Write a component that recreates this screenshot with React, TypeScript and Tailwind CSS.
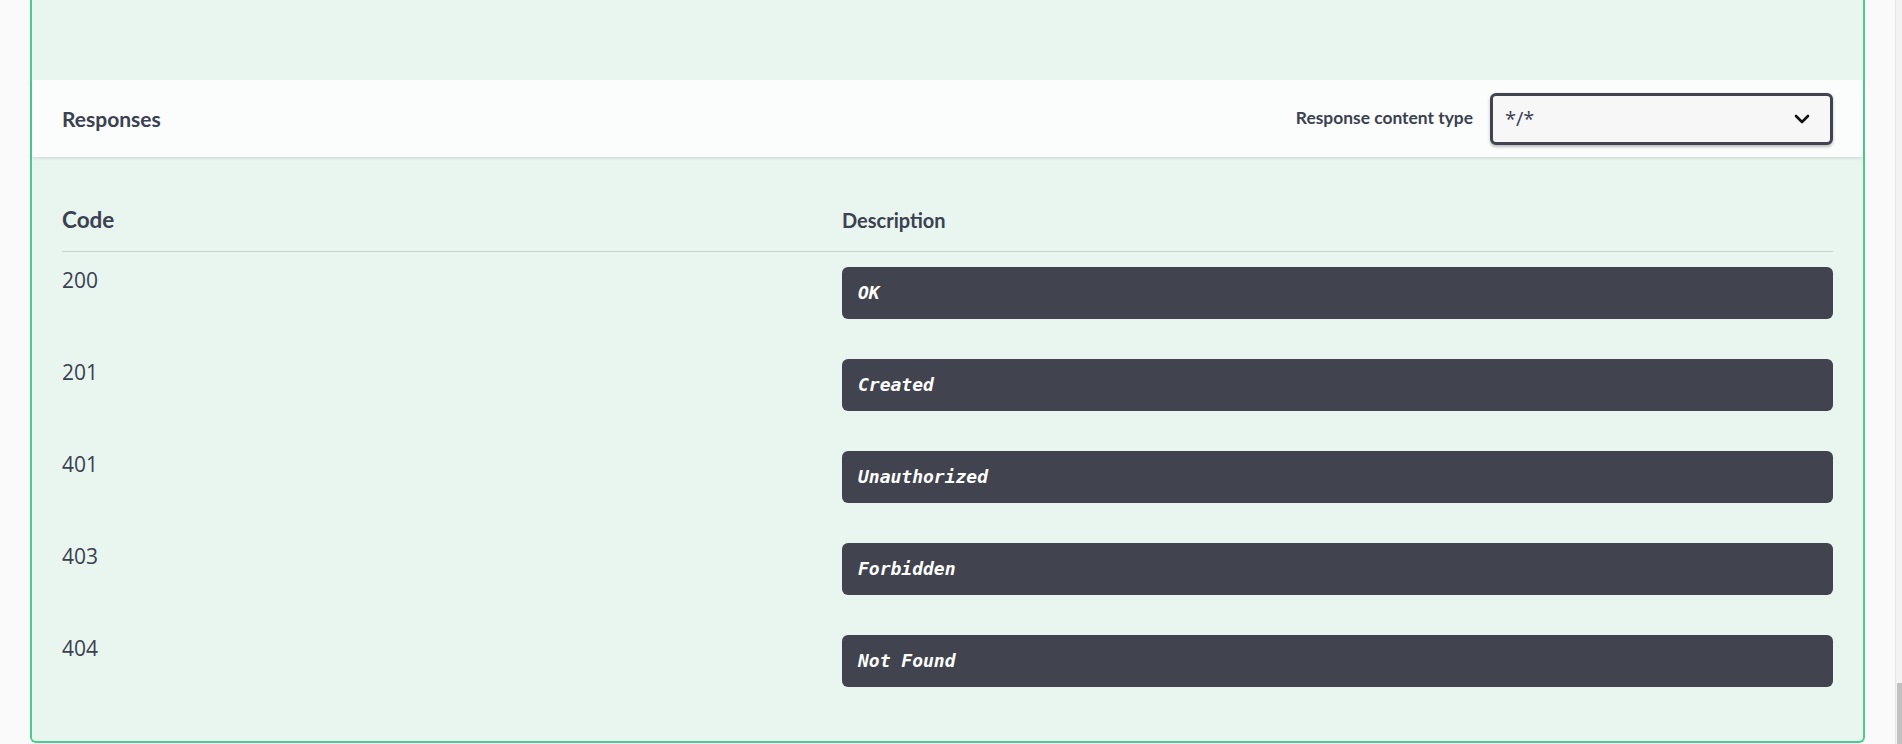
import React from "react";

const rows = [
  { code: "200", desc: "OK" },
  { code: "201", desc: "Created" },
  { code: "401", desc: "Unauthorized" },
  { code: "403", desc: "Forbidden" },
  { code: "404", desc: "Not Found" },
];

export default function App() {
  return (
    <div className="flex h-[744px] w-full overflow-hidden bg-[#fafafa]">
      <div className="flex-1 px-[30px]">
        <div className="flex flex-col rounded-b-[6px] border-x-2 border-b-2 border-[#49cc90] bg-[#e8f6ef]">
          <div className="h-[80px]" />
          <div className="flex h-[77px] items-center justify-between bg-[#fafdfb] px-[30px] shadow-[0_1.5px_3px_rgba(0,0,0,0.1)]">
            <h4 className="font-['Lato',sans-serif] text-[21px] font-bold text-[#3b4151]">Responses</h4>
            <div className="flex items-center">
              <label className="mr-[17px] font-['Lato',sans-serif] text-[17.4px] font-bold text-[#3b4151]">
                Response content type
              </label>
              <div className="flex h-[52px] w-[343px] items-center justify-between rounded-[6px] border-[3px] border-[#41444e] bg-[#f7f7f7] pl-[12px] pr-[20px] shadow-[0_1.5px_3px_rgba(0,0,0,0.25)]">
                <span className="font-['Open_Sans',sans-serif] text-[20px] font-medium text-[#3b4151]">*/*</span>
                <svg width="16" height="10" viewBox="0 0 16 10" fill="none">
                  <path d="M2 2 L8 8 L14 2" stroke="#111" strokeWidth="2.6" strokeLinecap="round" strokeLinejoin="round" />
                </svg>
              </div>
            </div>
          </div>
          <div className="px-[30px]">
            <div className="grid grid-cols-[780px_1fr] items-center border-b-[1.5px] border-[#c5d3cd] pb-[15px] pt-[47px] font-['Lato',sans-serif] font-bold leading-[32px] text-[#3b4151]">
              <div className="text-[22.5px]">Code</div>
              <div className="text-[20px]">Description</div>
            </div>
            <div className="flex flex-col gap-[40px] pb-[54px] pt-[14.5px]">
              {rows.map((r) => (
                <div key={r.code} className="grid grid-cols-[780px_1fr]">
                  <div className="-mt-[2px] font-['Open_Sans',sans-serif] text-[21px] leading-[30px] text-[#3b4151]">
                    {r.code}
                  </div>
                  <div className="flex h-[52px] items-center rounded-[6px] bg-[#41444e] px-[16px]">
                    <span className="font-['DejaVu_Sans_Mono',monospace] text-[18px] font-bold italic text-white">
                      {r.desc}
                    </span>
                  </div>
                </div>
              ))}
            </div>
          </div>
        </div>
      </div>
      <div className="flex w-[7px] flex-col justify-end border-l border-[#e6e6e6] bg-[#f3f3f3]">
        <div className="ml-[1px] h-[61px] bg-[#c1c1c1]" />
      </div>
    </div>
  );
}
